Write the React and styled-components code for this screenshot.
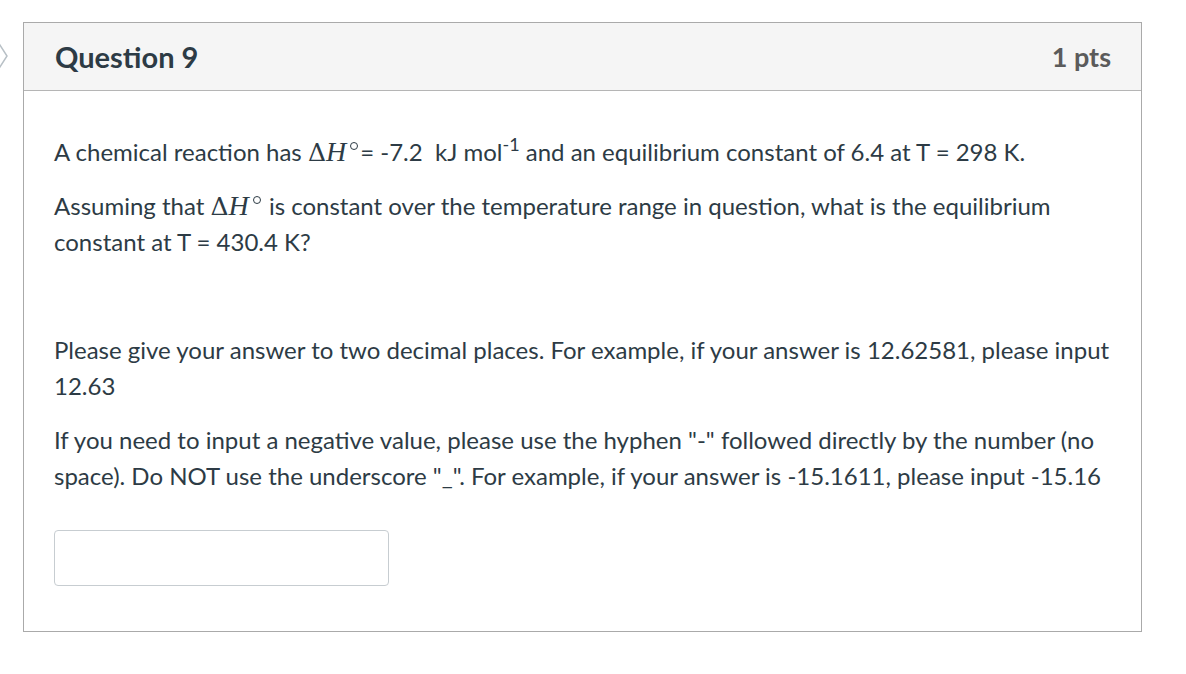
import React from "react";
import styled, { createGlobalStyle } from "styled-components";

const Global = createGlobalStyle`
  html, body { margin: 0; padding: 0; background: #fff; }
  body { font-family: Lato, "Noto Sans", sans-serif; color: #2d3b45; }
`;

const Page = styled.div`
  position: relative;
  padding: 22px 0 0 23px;
  width: 1119px;
`;

const Chevron = styled.svg`
  position: absolute;
  left: -6px;
  top: 40px;
`;

const Card = styled.section`
  border: 1px solid #aaaaaa;
  background: #fff;
`;

const Header = styled.header`
  display: flex;
  align-items: center;
  justify-content: space-between;
  height: 67px;
  padding: 0 30px 0 31px;
  background: #f5f5f5;
  border-bottom: 1px solid #b5b5b5;
`;

const Title = styled.h2`
  margin: 0;
  font-size: 29px;
  font-weight: 700;
  color: #2d3b45;
`;

const Points = styled.span`
  font-size: 27px;
  font-weight: 700;
  color: #5b5b5b;
`;

const Body = styled.div`
  padding: 25px 31px 45px 30px;
`;

const Para = styled.p`
  margin: 18px 0;
  font-size: 24px;
  line-height: 36px;
  color: #2d3b45;
`;

const Math = styled.span`
  font-family: "DejaVu Serif", "Liberation Serif", serif;
  font-size: 25px;
  line-height: 1;
`;

const MathItalic = styled.i`
  font-family: "Liberation Serif", "DejaVu Serif", serif;
  font-size: 28px;
  line-height: 1;
`;

const Sup = styled.sup`
  font-size: 18px;
  line-height: 0;
  vertical-align: 10px;
`;

const Degree = styled.span`
  display: inline-block;
  width: 6px;
  height: 6px;
  border: 1.4px solid #2d3b45;
  border-radius: 50%;
  margin: 0 2px 0 4px;
  vertical-align: 11px;
`;

const Input = styled.input`
  display: block;
  margin-top: 36px;
  width: 335px;
  height: 56px;
  box-sizing: border-box;
  border: 1px solid #c7cdd1;
  border-radius: 4px;
  background: #fff;
  font-family: Lato, sans-serif;
  font-size: 20px;
  padding: 0 12px;
`;

const DeltaH = () => (
  <Math>
    Δ<MathItalic>H</MathItalic>
    <Degree />
  </Math>
);

export default function App() {
  return (
    <>
      <Global />
      <Page>
        <Chevron width="16" height="32" viewBox="0 0 16 32">
          <path d="M4 2 L13 16 L4 30" fill="none" stroke="#b8c0c6" strokeWidth="1.5" />
        </Chevron>
        <Card>
          <Header>
            <Title>Question 9</Title>
            <Points>1 pts</Points>
          </Header>
          <Body>
            <Para>
              A chemical reaction has <DeltaH />= -7.2&nbsp; kJ mol<Sup>-1</Sup> and an equilibrium constant of 6.4 at T = 298 K.
            </Para>
            <Para>
              Assuming that <DeltaH /> is constant over the temperature range in question, what is the equilibrium constant at T = 430.4 K?
            </Para>
            <Para>&nbsp;</Para>
            <Para>
              Please give your answer to two decimal places. For example, if your answer is 12.62581, please input 12.63
            </Para>
            <Para>
              If you need to input a negative value, please use the hyphen "-" followed directly by the number (no space). Do NOT use the underscore "_". For example, if your answer is -15.1611, please input -15.16
            </Para>
            <Input type="text" aria-label="answer" />
          </Body>
        </Card>
      </Page>
    </>
  );
}
